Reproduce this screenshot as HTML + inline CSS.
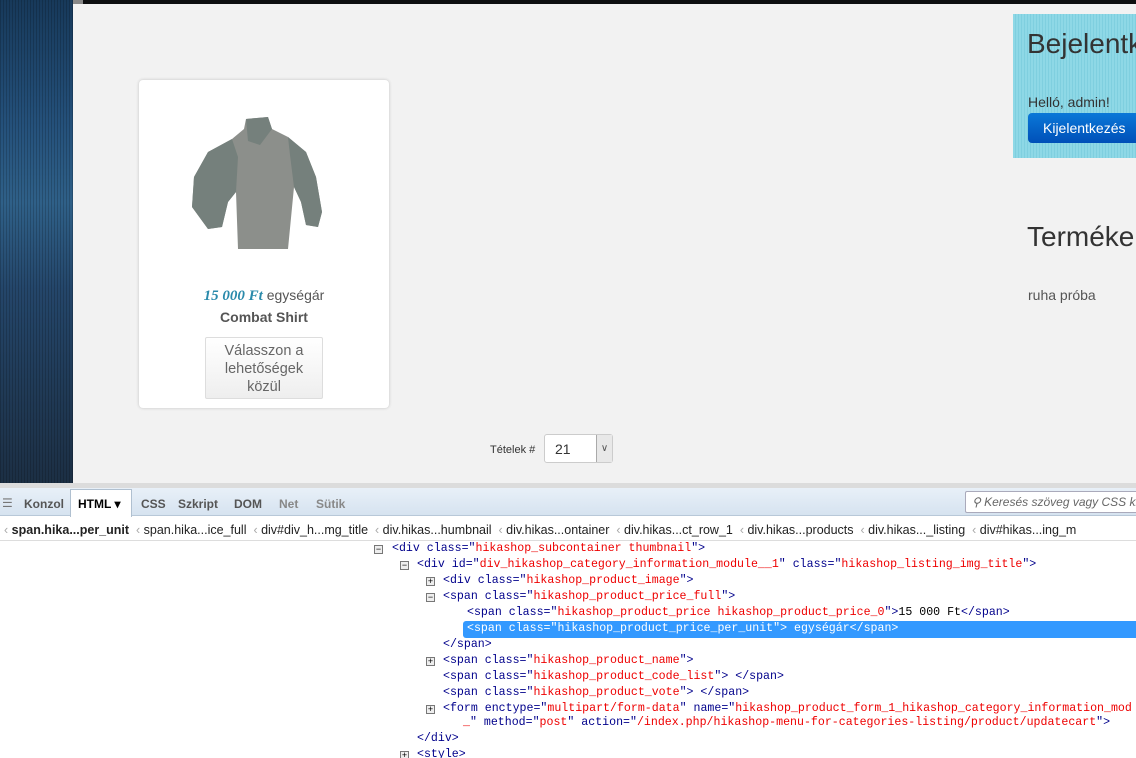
<!DOCTYPE html>
<html><head><meta charset="utf-8"><style>
*{margin:0;padding:0;box-sizing:border-box}
html,body{overflow:hidden}
body{width:1136px;height:758px;overflow:hidden;background:#f2f2f2;font-family:"Liberation Sans",sans-serif;position:relative}
.abs{position:absolute}
#left{left:0;top:0;width:73px;height:483px;background:linear-gradient(180deg,#17395a 0%,#24507a 25%,#2f6088 42%,#24466a 60%,#1c2f44 100%)}
#left2{left:0;top:0;width:73px;height:483px;background:repeating-linear-gradient(90deg,rgba(0,0,0,.18) 0 1px,rgba(0,0,0,0) 1px 3px)}
#topbar{left:83px;top:0;width:1053px;height:4px;background:#0d0f10}
#topgray{left:73px;top:0;width:10px;height:4px;background:#888}
.card{left:139px;top:80px;width:250px;height:328px;background:#fff;border-radius:4px;box-shadow:0 0 3px rgba(0,0,0,.2)}
.btn{left:205px;top:337px;width:118px;height:62px;border:1px solid #ddd;border-radius:2px;background:linear-gradient(#fff,#eee);color:#666;font-size:14.5px;text-align:center;line-height:18px;padding-top:4px}
.login{left:1013px;top:14px;width:123px;height:144px;background:repeating-linear-gradient(90deg,#8ed8e6 0 2px,#7fcfdf 2px 3px)}
#dev{left:0;top:483px;width:1136px;height:275px;background:#fff}
.code{font-family:"Liberation Mono",monospace;font-size:11.6px;white-space:pre;line-height:16px;height:16px;color:#00008b}
.r{color:#e00}
.ic{width:9px;height:9px;border:1px solid #777;background:#eee;font-size:9px;line-height:7px;text-align:center;color:#000;font-family:"Liberation Sans";}
</style></head><body>
<div class="abs" id="left"></div><div class="abs" id="left2"></div>
<div class="abs" id="topgray"></div><div class="abs" id="topbar"></div>

<div class="abs card"></div>
<svg class="abs" style="left:188px;top:117px" width="136" height="135" viewBox="0 0 136 135">
<path d="M58 2 L80 0 L84 12 L100 20 L118 35 L128 60 L134 95 L130 110 L118 108 L113 85 L106 70 L100 132 L50 132 L48 75 L40 85 L34 110 L20 112 L4 90 L6 60 L20 35 L44 22 L56 12 Z" fill="#8c8f8b"/>
<path d="M58 2 L80 0 L84 12 L72 28 L60 24 Z M44 22 L20 35 L6 60 L4 90 L20 112 L34 110 L40 85 L48 75 L50 40 Z M100 20 L118 35 L128 60 L134 95 L130 110 L118 108 L113 85 L106 70 L102 38 Z" fill="#75807c"/>
</svg>
<div class="abs" style="left:139px;top:287px;width:250px;text-align:center;font-size:14px;color:#555"><i style="font-family:'Liberation Serif',serif;font-weight:bold;color:#2a8aab;font-size:15px">15 000 Ft</i> egységár</div>
<div class="abs" style="left:139px;top:309px;width:250px;text-align:center;font-size:14px;color:#555;font-weight:bold">Combat Shirt</div>
<div class="abs btn">Válasszon a<br>lehetőségek<br>közül</div>
<div class="abs" style="left:490px;top:444px;font-size:11px;color:#333">Tételek #</div>
<div class="abs" style="left:544px;top:434px;width:69px;height:29px;border:1px solid #ccc;border-radius:3px;background:#fff;font-size:14px;padding:6px 0 0 10px;color:#333">21</div>
<div class="abs" style="left:596px;top:435px;width:16px;height:27px;border-left:1px solid #aaa;background:#e8e8e8;color:#555;font-size:10px;text-align:center;line-height:27px">&#8744;</div>

<div class="abs login"></div>
<div class="abs" style="left:1027px;top:28px;width:109px;overflow:hidden;font-size:28px;color:#333;white-space:nowrap">Bejelentkezés</div>
<div class="abs" style="left:1028px;top:94px;font-size:14px;color:#333">Helló, admin!</div>
<div class="abs" style="left:1028px;top:113px;width:108px;height:30px;border-radius:4px 0 0 4px;background:linear-gradient(#0a78d8,#0050b8);color:#fff;font-size:14px;line-height:30px;padding-left:15px;white-space:nowrap;overflow:hidden">Kijelentkezés</div>
<div class="abs" style="left:1027px;top:221px;width:109px;overflow:hidden;font-size:28px;color:#333;white-space:nowrap">Termékek</div>
<div class="abs" style="left:1028px;top:287px;font-size:14px;color:#555">ruha próba</div>

<div class="abs" id="dev"></div>
<div class="abs" style="left:0;top:483px;width:1136px;height:5px;background:#dcdcdc"></div>
<div class="abs" style="left:0;top:488px;width:1136px;height:28px;background:linear-gradient(#e8f0f8,#d6e3f0);border-bottom:1px solid #b8c8d8"></div>
<div class="abs" style="left:70px;top:489px;width:62px;height:28px;background:#fff;border:1px solid #b0c0d0;border-bottom:none"></div>
<div class="abs" style="left:2px;top:496px;font-size:12px;color:#777">☰</div>
<div class="abs" style="top:497px;left:24px;font-size:12px;color:#555;font-weight:bold">Konzol</div>
<div class="abs" style="top:497px;left:78px;font-size:12px;color:#000;font-weight:bold">HTML ▾</div>
<div class="abs" style="top:497px;left:141px;font-size:12px;color:#555;font-weight:bold">CSS</div>
<div class="abs" style="top:497px;left:178px;font-size:12px;color:#555;font-weight:bold">Szkript</div>
<div class="abs" style="top:497px;left:234px;font-size:12px;color:#555;font-weight:bold">DOM</div>
<div class="abs" style="top:497px;left:279px;font-size:12px;color:#888;font-weight:bold">Net</div>
<div class="abs" style="top:497px;left:316px;font-size:12px;color:#888;font-weight:bold">Sütik</div>
<div class="abs" style="left:965px;top:491px;width:171px;height:22px;background:#fff;border:1px solid #aab;border-right:none;border-radius:2px 0 0 2px;font-size:12px;color:#666;font-style:italic;padding:3px 0 0 6px;white-space:nowrap;overflow:hidden">&#9906; Keresés szöveg vagy CSS kiv</div>
<div class="abs" style="left:0;top:517px;width:1136px;height:24px;background:#fff;border-bottom:1px solid #ddd"></div>
<div class="abs" style="left:4px;top:523px;width:1132px;overflow:hidden;font-size:12.5px;color:#222;white-space:nowrap"><span style="color:#aaa">‹</span> <b>span.hika...per_unit</b> &nbsp;<span style="color:#aaa">‹</span> span.hika...ice_full &nbsp;<span style="color:#aaa">‹</span> div#div_h...mg_title &nbsp;<span style="color:#aaa">‹</span> div.hikas...humbnail &nbsp;<span style="color:#aaa">‹</span> div.hikas...ontainer &nbsp;<span style="color:#aaa">‹</span> div.hikas...ct_row_1 &nbsp;<span style="color:#aaa">‹</span> div.hikas...products &nbsp;<span style="color:#aaa">‹</span> div.hikas..._listing &nbsp;<span style="color:#aaa">‹</span> div#hikas...ing_m</div>

<div class="abs" style="left:463px;top:621px;width:673px;height:17px;background:#3399ff;border-radius:3px 0 0 3px"></div>

<div class="abs" style="left:0;top:541px;width:1136px;height:217px;overflow:hidden">
<div style="position:relative;top:-541px">
<div class="abs ic" style="left:374px;top:545px">−</div>
<div class="abs code" style="left:392px;top:541px">&lt;div class="<span class="r">hikashop_subcontainer thumbnail</span>"&gt;</div>
<div class="abs ic" style="left:400px;top:561px">−</div>
<div class="abs code" style="left:417px;top:557px">&lt;div id="<span class="r">div_hikashop_category_information_module__1</span>" class="<span class="r">hikashop_listing_img_title</span>"&gt;</div>
<div class="abs ic" style="left:426px;top:577px">+</div>
<div class="abs code" style="left:443px;top:573px">&lt;div class="<span class="r">hikashop_product_image</span>"&gt;</div>
<div class="abs ic" style="left:426px;top:593px">−</div>
<div class="abs code" style="left:443px;top:589px">&lt;span class="<span class="r">hikashop_product_price_full</span>"&gt;</div>
<div class="abs code" style="left:467px;top:605px">&lt;span class="<span class="r">hikashop_product_price hikashop_product_price_0</span>"&gt;<span style="color:#000">15 000 Ft</span>&lt;/span&gt;</div>
<div class="abs code" style="left:467px;top:621px;color:#fff">&lt;span class="hikashop_product_price_per_unit"&gt; egységár&lt;/span&gt;</div>
<div class="abs code" style="left:443px;top:637px">&lt;/span&gt;</div>
<div class="abs ic" style="left:426px;top:657px">+</div>
<div class="abs code" style="left:443px;top:653px">&lt;span class="<span class="r">hikashop_product_name</span>"&gt;</div>
<div class="abs code" style="left:443px;top:669px">&lt;span class="<span class="r">hikashop_product_code_list</span>"&gt; &lt;/span&gt;</div>
<div class="abs code" style="left:443px;top:685px">&lt;span class="<span class="r">hikashop_product_vote</span>"&gt; &lt;/span&gt;</div>
<div class="abs ic" style="left:426px;top:705px">+</div>
<div class="abs code" style="left:443px;top:701px">&lt;form enctype="<span class="r">multipart/form-data</span>" name="<span class="r">hikashop_product_form_1_hikashop_category_information_mod</span></div>
<div class="abs code" style="left:463px;top:715px"><span class="r">_</span>" method="<span class="r">post</span>" action="<span class="r">/index.php/hikashop-menu-for-categories-listing/product/updatecart</span>"&gt;</div>
<div class="abs code" style="left:417px;top:731px">&lt;/div&gt;</div>
<div class="abs ic" style="left:400px;top:751px">+</div>
<div class="abs code" style="left:417px;top:747px">&lt;style&gt;</div>
</div></div>
</body></html>
